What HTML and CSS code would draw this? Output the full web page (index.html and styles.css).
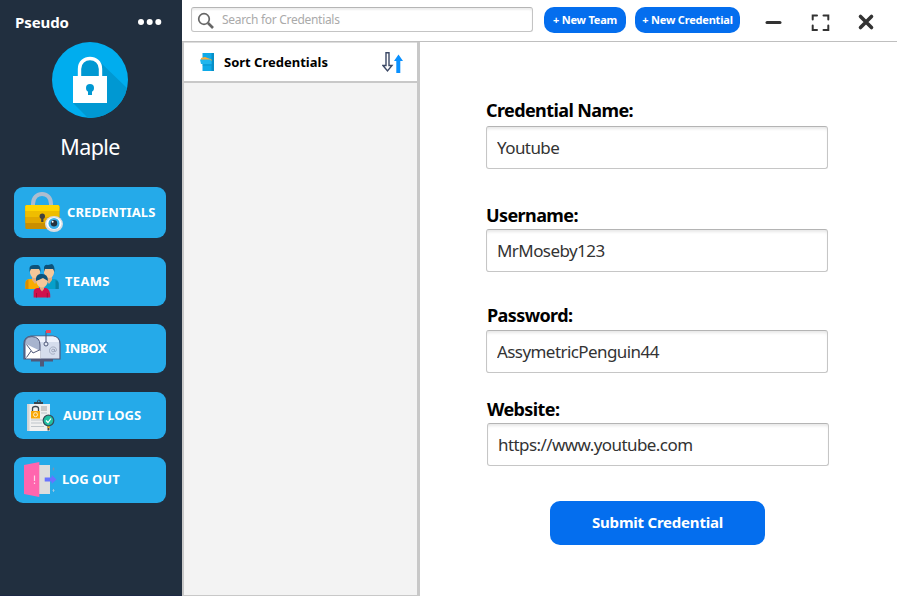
FILE: index.html
```html
<!DOCTYPE html>
<html lang="en">
<head>
<meta charset="utf-8">
<title>Pseudo</title>
<link rel="stylesheet" href="styles.css">
</head>
<body>
<div class="app">
  <aside class="sidebar">
    <div class="brand">
      <span class="brand-name">Pseudo</span>
      <svg class="dots" viewBox="0 0 24 8" fill="#fff"><circle cx="3" cy="4" r="3"/><circle cx="11.7" cy="4" r="3"/><circle cx="20.3" cy="4" r="3"/></svg>
    </div>
    <svg class="avatar" viewBox="52 42 76 76">
      <defs><clipPath id="disc"><circle cx="90" cy="80" r="38"/></clipPath></defs>
      <circle cx="90" cy="80" r="38" fill="#00adee"/>
      <path clip-path="url(#disc)" fill="#0098d2" d="M98.500 60.500L132 93V124H94L73 103V76H80V68Q80 58 90 58Z"/>
      <path d="M79.500 77V69C79.500 55 100.500 55 100.500 69V77" fill="none" stroke="#fff" stroke-width="3.400"/>
      <path d="M73 76H107V103H73Z" fill="#fff"/>
      <circle cx="90" cy="88" r="4" fill="#0098d2"/><path d="M88 89H92V95H88Z" fill="#0098d2"/>
    </svg>
    <div class="user">Maple</div>
    <nav class="nav">
      <button class="nav-item credentials">
        <svg viewBox="14 187 50 51">
          <path d="M33 206V204C33 190.500 51 190.500 51 204V206" fill="none" stroke="#acbdcf" stroke-width="4"/>
          <rect x="25.300" y="205" width="34" height="24" rx="1.500" fill="#c98e00"/>
          <path d="M25.300 206.500Q25.300 205 27 205H57.500Q59.300 205 59.300 206.500V223H25.300Z" fill="#e2a800"/>
          <path d="M25.300 206.500Q25.300 205 27 205H57.500Q59.300 205 59.300 206.500V217H25.300Z" fill="#efbd00"/>
          <path d="M25.300 206.500Q25.300 205 27 205H57.500Q59.300 205 59.300 206.500V211H25.300Z" fill="#ffd500"/>
          <circle cx="42.300" cy="216.300" r="2.700" fill="#42413f"/><path d="M41.200 217H43.400V222H41.200Z" fill="#42413f"/>
          <ellipse cx="54" cy="224" rx="9" ry="8" fill="#d9dde3"/>
          <ellipse cx="54" cy="223.500" rx="7.500" ry="6" fill="#fff"/>
          <circle cx="54" cy="223.500" r="5.500" fill="#38ade8"/><circle cx="54" cy="223.300" r="3.200" fill="#25313d"/><circle cx="52.600" cy="221.800" r="1" fill="#fff"/>
        </svg><span>CREDENTIALS</span>
      </button>
      <button class="nav-item teams">
        <svg viewBox="14 257 50 49">
          <path d="M25.500 289V283Q25.500 279 30 279H39V289Z" fill="#f9ab00"/><path d="M25.500 289V283Q25.500 280.500 28.500 279.500V289Z" fill="#d98d00"/>
          <path d="M45 279H54Q58.700 279 58.700 284V289H45Z" fill="#05a0cb"/><path d="M55.500 280Q58.700 281 58.700 284V289H55.500Z" fill="#087fa3"/>
          <path d="M32 276H38V280L35 284L32 280ZM46 276H52V280L49 284L46 280Z" fill="#dfac83"/>
          <path d="M30 268H40V273Q39 278 35 278T30 273ZM44 268H54V273Q53 278 49 278T44 273Z" fill="#f4c799"/>
          <path d="M29.500 272V268Q30 265 34 265H38Q41 266 40.500 272L39 269H31ZM44 272V267Q45 264 48 265L52 264Q55 266 54.500 272L53 269H45Z" fill="#0c5279"/>
          <path d="M33.600 297.500V292Q34 288 38 288H46Q50.500 289 50.300 297.500Z" fill="#cf104e"/>
          <path d="M36.500 293V297.500M47.300 293V297.500" stroke="#98113e" stroke-width="1"/>
          <path d="M40 285H44V289L42 291.500L40 289Z" fill="#dfac83"/>
          <path d="M36.500 278H47.500V283Q45.500 287.500 42 287.500T36.500 283Z" fill="#f4c799"/>
          <path d="M36 281V278Q37 273.500 42 274Q48 274 48 281L43 278Q39 280 36 281Z" fill="#0c5279"/>
        </svg><span>TEAMS</span>
      </button>
      <button class="nav-item inbox">
        <svg viewBox="14 324 50 49">
          <path d="M31 359H53V361.500H31ZM40 361H44V366.500H40Z" fill="#50597a"/>
          <path d="M31 336H53Q60 337 60 344V359H24V344Q24 337 31 336Z" fill="#d5dded" stroke="#50597a" stroke-width="1.200"/>
          <path d="M33 336.600H53Q58 337 59 342H39Q38 337 33 336.600Z" fill="#eef2fc"/>
          <path d="M24.600 344Q24.600 336.600 32 336.600Q40 337 40 345V358.500H24.600Z" fill="#a7b4ce" stroke="#50597a" stroke-width="1"/>
          <path d="M26 344L40.500 351V358.500H26Z" fill="#fff"/><path d="M26.500 344.500L33 353L39.500 350M26.500 357.500L31 351" fill="none" stroke="#50597a" stroke-width="1"/>
          <path d="M46 343V331" stroke="#50597a" stroke-width="1.100"/><path d="M46 330H50.800V333H46Z" fill="#ed4756"/>
          <circle cx="46" cy="344" r="2" fill="#e4e9f4" stroke="#50597a"/>
          <circle cx="53" cy="350.500" r="1.400" fill="none" stroke="#969fb5" stroke-width=".8"/><path d="M54.500 349V351.500Q56.500 352 56.500 349.500C55.500 345.500 49.500 346.500 49.500 350.500C49.500 354 53 355 55 353.500" fill="none" stroke="#969fb5" stroke-width=".8"/>
        </svg><span>INBOX</span>
      </button>
      <button class="nav-item audit">
        <svg viewBox="14 392 50 47">
          <path d="M27.300 404H50V431H27.300Z" fill="#f0f0f0"/><path d="M27.300 404H29.500V431H27.300Z" fill="#d5d5d5"/>
          <path d="M34 404V402H37Q37 399.500 39 399.500T41 402H43V404Z" fill="#38454f"/><circle cx="38.800" cy="401.300" r=".9" fill="#25aae9"/>
          <path d="M41 406H47V411H41Z" fill="#c8c8c8"/><path d="M41 413H47M31 420H43M31 423H42M31 426.500H44" stroke="#bfc5ca"/>
          <path d="M32.500 412V408.500Q32.500 406.500 35.500 406.500T38.500 408.500V412" fill="none" stroke="#39454f" stroke-width="1.300"/>
          <path d="M31 411H40V418.500H31Z" fill="#f8a80a"/><circle cx="35.500" cy="414.700" r="2" fill="none" stroke="#ffedc3"/>
          <path d="M48.500 425V430.500" stroke="#4d4a42" stroke-width="2"/><path d="M48.500 426V428" stroke="#f8a80a" stroke-width="2"/>
          <circle cx="48.500" cy="420.500" r="5.300" fill="#20c0a2" stroke="#35505c" stroke-width="1.200"/><path d="M46 420.500L48 422.500L51 418.500" fill="none" stroke="#fff" stroke-width="1.200"/>
        </svg><span>AUDIT LOGS</span>
      </button>
      <button class="nav-item logout">
        <svg viewBox="14 457 50 46">
          <path d="M39 465H50V494H39Z" fill="#ddd"/><path d="M24 465L39.300 462V497L24 494Z" fill="#ff66ae"/>
          <path d="M34.500 475.500V481M34.500 482.500V484" stroke="#ffd4e7" stroke-width="1.200"/>
          <path d="M44.700 477.500H51.700V475L56.500 479.500L51.700 484V481.500H44.700Z" fill="#6873ff"/>
          <path d="M53.500 467.500V470.500M52.500 469H54.500" stroke="#8791a8" stroke-width=".8"/><path d="M53.500 489V492M52.500 490.500H54.500" stroke="#a8c9e0" stroke-width=".8"/>
        </svg><span>LOG OUT</span>
      </button>
    </nav>
  </aside>
  <div class="workspace">
    <header class="topbar">
      <div class="search">
        <svg viewBox="0 0 18 18" fill="none" stroke="#666"><circle cx="7" cy="7" r="5.300" stroke-width="1.700"/><path d="M11 11L16 16" stroke-width="2.600"/></svg>
        <span>Search for Credentials</span>
      </div>
      <button class="pill team">+ New Team</button>
      <button class="pill credential">+ New Credential</button>
      <div class="window-controls">
        <svg viewBox="765 10 110 24" fill="none" stroke="#333">
          <path d="M767 22.500H780" stroke-width="3" stroke-linecap="round"/>
          <path d="M812.700 19.500V15.500H817M823.500 15.500H828.300V19.500M812.700 25.500V30H817M823.500 30H828.300V25.500" stroke-width="2" stroke-linecap="round"/>
          <path d="M860.500 16.500L871.500 27.500M871.500 16.500L860.500 27.500" stroke-width="3.600" stroke-linecap="round"/>
        </svg>
      </div>
    </header>
    <div class="content">
      <section class="list">
        <div class="sort">
          <svg class="cabinet" viewBox="200 51 15 20"><path d="M202.500 52H214V70H202.500Z" fill="#0eaae8"/><path d="M211.500 52H214V70H211.500Z" fill="#078fc6"/><path d="M201 57L205 56L211.500 58.500V60H201Z" fill="#ffac35"/><path d="M200 58.500H210L211.500 60V63H201Z" fill="#20b6ed"/><path d="M202.500 64H211.500" stroke="#078fc6" stroke-width=".8"/></svg>
          <span>Sort Credentials</span>
          <svg class="arrows" viewBox="382 51 22 23"><path d="M386 52.700H389V65.500H392L387.500 71L383 65.500H386Z" fill="#fff" stroke="#3c4966" stroke-width="1.400"/><path d="M398.500 54.500L403 61H400.300V73H396.300V61H394Z" fill="#0a91ff"/></svg>
        </div>
      </section>
      <main class="form">
        <label class="field name"><span>Credential Name:</span><input type="text" value="Youtube"></label>
        <label class="field username"><span>Username:</span><input type="text" value="MrMoseby123"></label>
        <label class="field password"><span>Password:</span><input type="text" value="AssymetricPenguin44"></label>
        <label class="field website"><span>Website:</span><input type="text" value="https://www.youtube.com"></label>
        <button class="submit">Submit Credential</button>
      </main>
    </div>
  </div>
</div>
</body>
</html>
```
FILE: styles.css
```css
* { box-sizing: border-box; }
body { margin: 0; background: #fff; font-family: "Noto Sans", "Open Sans", sans-serif; }
button, input { font-family: inherit; border: 0; margin: 0; }
svg { display: block; flex: none; }
.app { display: flex; width: 897px; height: 596px; overflow: hidden; }

.sidebar { width: 182px; background: #212f3f; color: #fff; border-bottom: 1px solid #1c2845; }
.brand { display: flex; align-items: center; height: 42px; padding: 3px 20px 0 15px; justify-content: space-between; }
.brand-name { padding-bottom: 2px; font-size: 15px; font-weight: 700; letter-spacing: -.1px; }
.dots { width: 24px; height: 8px; margin-bottom: 1px; }
.avatar { width: 76px; height: 76px; margin-left: 52px; }
.user { height: 69px; padding: 14px 2px 0 0; font-size: 21.500px; line-height: 30px; text-align: center; letter-spacing: -.6px; }
.nav { padding: 0 16px 0 14px; }
.nav-item { display: flex; align-items: center; width: 152px; height: 49px; padding: 0; border-radius: 9px; background: #25aae9; color: #fff; font-size: 13px; font-weight: 700; white-space: nowrap; }
.nav-item svg { width: 50px; height: 100%; }
.nav-item span { margin-left: 1px; padding-bottom: 2px; }
.credentials { height: 51px; margin-bottom: 19px; }
.credentials span { margin-left: 3px; letter-spacing: .08px; }
.teams { margin-bottom: 18px; }
.teams span { letter-spacing: .3px; }
.inbox { margin-bottom: 19px; }
.inbox span { letter-spacing: -.3px; }
.audit { height: 47px; margin-bottom: 18px; }
.audit span { margin-left: -1px; }
.logout { height: 46px; }
.logout span { margin-left: -2px; }

.workspace { width: 715px; display: flex; flex-direction: column; }
.topbar { display: flex; align-items: flex-start; height: 42px; padding: 7px 0 0 9px; border-bottom: 1px solid #bfbfbf; }
.search { display: flex; align-items: center; width: 342px; height: 25px; padding-left: 5px; border: 1px solid #c4c4c4; border-top-color: #b5b5b5; border-radius: 3px; box-shadow: inset 0 2px 2px #eee; color: #aaa; font-size: 12px; letter-spacing: -.3px; }
.search svg { width: 18px; height: 18px; margin: 2px 7px 0 0; }
.pill { height: 26px; padding: 0 0 2px; border-radius: 10px; background: #046eee; color: #fff; font-size: 11px; font-weight: 700; letter-spacing: -.2px; white-space: nowrap; }
.team { width: 82px; margin-left: 11px; }
.credential { width: 105px; margin-left: 9px; }
.window-controls { margin: 3px 0 0 25px; }
.window-controls svg { width: 110px; height: 24px; }

.content { display: flex; flex: 1; }
.list { width: 238px; background: #f3f3f3; border: solid #c8c8c8; border-width: 0 3px 1px 2px; }
.sort { display: flex; align-items: center; height: 41px; padding: 0 13px 0 16px; background: #fff; border-top: 1px solid #ddd; border-bottom: 2px solid #c8c8c8; font-size: 13px; font-weight: 700; }
.cabinet { width: 15px; height: 20px; margin: 0 9px 1px 0; }
.arrows { width: 22px; height: 23px; margin-left: auto; }
.form { width: 477px; padding: 56px 0 0 66px; }
.field { display: block; width: 342px; }
.field span { display: block; height: 28px; font-size: 18px; line-height: 26px; font-weight: 700; letter-spacing: -.6px; white-space: nowrap; }
.field input { display: block; width: 342px; height: 43px; padding: 0 10px 1px; border: 1px solid #c6c6c6; border-top-color: #b4b4b4; border-radius: 3px; background: #fff; box-shadow: inset 0 3px 3px -1px #e8e8e8; color: #333; font-size: 17px; letter-spacing: -.57px; }
.name { margin-bottom: 33px; }
.name span { line-height: 24px; }
.username { margin-bottom: 30px; }
.username span { height: 27px; }
.password { margin-bottom: 22px; }
.password span { padding-left: 1px; }
.website { margin-left: 1px; }
.website span { line-height: 28px; }
.submit { display: block; width: 215px; height: 44px; margin: 35px 0 0 64px; padding: 0 0 2px; border-radius: 10px; background: #046eee; color: #fff; font-size: 15px; font-weight: 700; letter-spacing: -.22px; }
```
